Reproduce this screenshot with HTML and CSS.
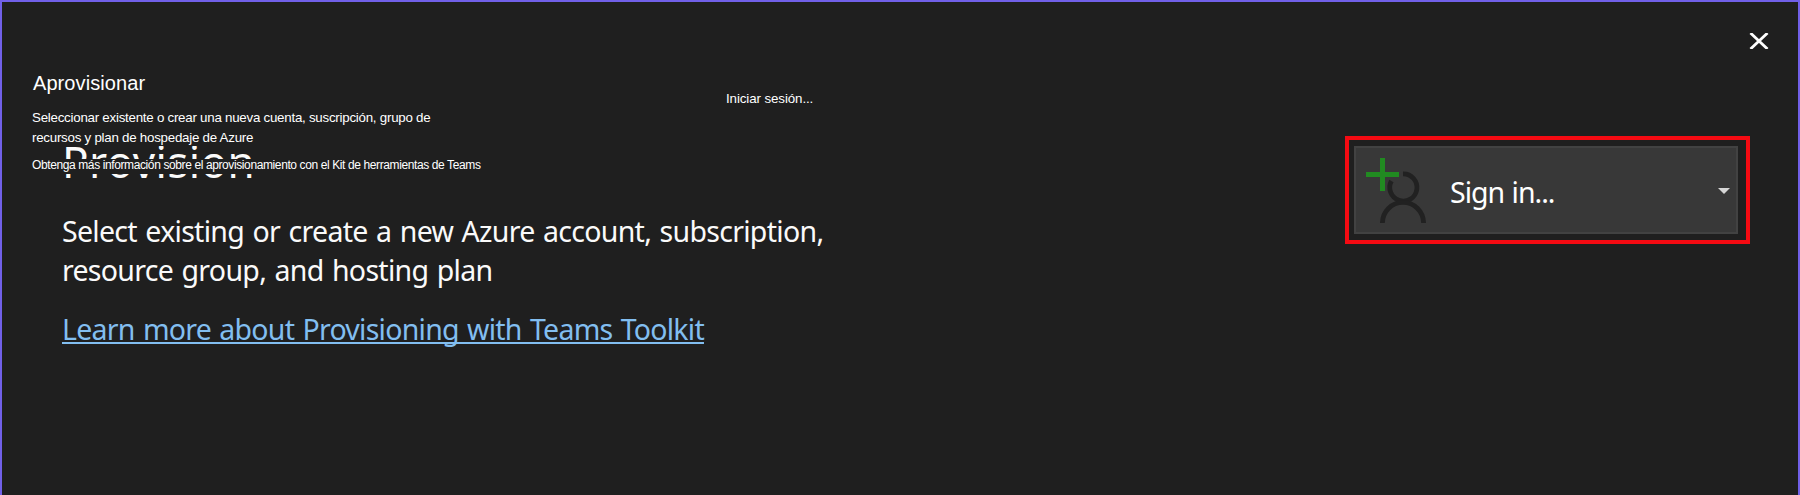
FILE: index.html
```html
<!DOCTYPE html>
<html lang="es">
<head>
<meta charset="utf-8">
<title>Provision</title>
<link rel="stylesheet" href="styles.css">
</head>
<body>
<main class="dialog">
  <section class="content">
    <h1 class="title">Provision</h1>
    <p class="lead">Select existing or create a new Azure account, subscription,<br>resource group, and hosting plan</p>
    <a class="learn">Learn more about Provisioning with Teams Toolkit</a>
  </section>
  <section class="account">
    <div class="highlight">
      <div class="signin">
        <svg class="user" width="62" height="66" viewBox="0 0 62 66">
          <g fill="none" stroke="#212121" stroke-width="4.8"><path d="M37 15.9A13.6 13.6 0 1 1 25.4 23"/><path d="M16.4 65A20.6 20.6 0 0 1 57.6 65"/></g>
          <path d="M0 14h33v5H0zM14 0h5v33h-5z" fill="#218a21"/>
        </svg>
        <span class="signin-label">Sign in...</span>
        <svg class="arrow" width="12" height="6" viewBox="0 0 12 6"><path d="M0 0h12L6 6z" fill="#d6d6d6"/></svg>
      </div>
    </div>
  </section>
  <svg class="close" width="20" height="16" viewBox="0 0 20 16"><path d="M1.5 0L18.5 16M18.5 0L1.5 16" stroke="#fff" stroke-width="2.8"/></svg>
  <div class="overlay ov-title">Aprovisionar</div>
  <div class="overlay ov-lead">Seleccionar existente o crear una nueva cuenta, suscripción, grupo de<br>recursos y plan de hospedaje de Azure</div>
  <div class="overlay ov-learn">Obtenga más información sobre el aprovisionamiento con el Kit de herramientas de Teams</div>
  <div class="overlay ov-signin">Iniciar sesión...</div>
</main>
</body>
</html>
```
FILE: styles.css
```css
body { margin: 0; background: #1f1f1f; }
.dialog {
  position: relative;
  box-sizing: border-box;
  width: 1800px;
  height: 495px;
  overflow: hidden;
  display: flex;
  justify-content: space-between;
  align-items: flex-start;
  background: #1f1f1f;
  border: 2px solid #7160e8;
  border-bottom: 0;
  color: #fafafa;
  font-family: "Noto Sans", sans-serif;
  white-space: nowrap;
}
.content { padding: 131px 0 0 60px; }
.title { margin: 0; font-size: 44px; line-height: 56px; font-weight: 400; letter-spacing: 0.4px; }
.lead { margin: 23px 0 0; font-size: 28.5px; line-height: 39px; letter-spacing: -0.7px; word-spacing: 1.7px; }
.learn {
  display: block;
  width: max-content;
  margin-top: 21px;
  font-size: 28.5px;
  line-height: 36px;
  letter-spacing: -0.75px;
  word-spacing: 1.6px;
  color: #82bef0;
  text-decoration: underline;
  text-decoration-thickness: 2px;
  text-underline-offset: 2px;
  text-decoration-skip-ink: none;
}
.account { padding: 134px 48px 0 0; }
.highlight {
  box-sizing: border-box;
  width: 405px;
  height: 108px;
  padding: 6px 8px 6px 5px;
  border: 4px solid #f50a12;
}
.signin {
  box-sizing: border-box;
  display: flex;
  align-items: center;
  height: 88px;
  padding: 0 6px 0 10px;
  border: 2px solid #424242;
  background: #383838;
  color: #fff;
}
.user { margin-top: 2px; }
.signin-label { margin: 4px 0 0 22px; font-size: 28.5px; line-height: 36px; letter-spacing: -1px; word-spacing: 1px; }
.arrow { margin: 2px 0 0 auto; }
.close { position: absolute; left: 1747px; top: 31px; }
.overlay { position: absolute; background: #1f1f1f; color: #fff; font-family: "Liberation Sans", Arial, sans-serif; }
.ov-title { left: 31px; top: 68px; font-size: 20px; line-height: 26px; letter-spacing: 0.08px; }
.ov-lead { left: 30px; top: 104px; padding-top: 2px; height: 38px; font-size: 13.33px; line-height: 20px; letter-spacing: -0.25px; }
.ov-learn { left: 30px; top: 157px; padding-bottom: 2px; font-size: 12px; line-height: 13px; letter-spacing: -0.39px; }
.ov-signin { left: 724px; top: 87px; font-size: 13.33px; line-height: 20px; letter-spacing: -0.1px; }
```
